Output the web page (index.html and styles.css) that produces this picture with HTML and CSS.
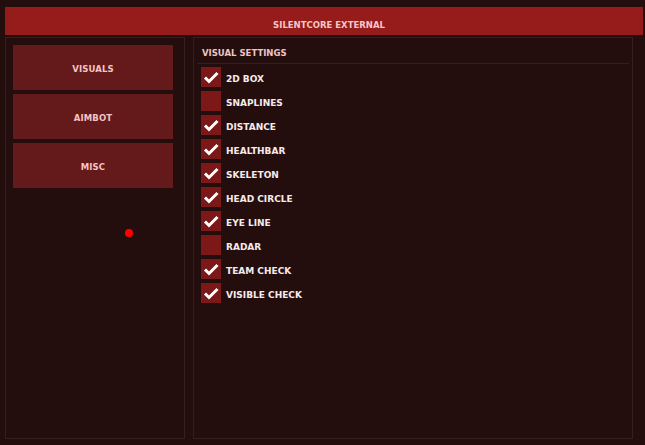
FILE: index.html
```html
<!DOCTYPE html>
<html lang="en">
<head>
<meta charset="utf-8">
<title>SilentCore External</title>
<link rel="stylesheet" href="styles.css">
</head>
<body>
<div class="app">
  <header class="title">SILENTCORE EXTERNAL</header>
  <main class="columns">
    <nav class="side">
      <button class="tab">VISUALS</button>
      <button class="tab">AIMBOT</button>
      <button class="tab">MISC</button>
    </nav>
    <section class="panel">
      <h2 class="heading">VISUAL SETTINGS</h2>
      <ul class="list">
        <li class="row"><span class="box"><svg class="tick" viewBox="0 0 20 20"><path d="M4 10.5 8 14.5 16.5 6"/></svg></span>2D BOX</li>
        <li class="row"><span class="box"></span>SNAPLINES</li>
        <li class="row"><span class="box"><svg class="tick" viewBox="0 0 20 20"><path d="M4 10.5 8 14.5 16.5 6"/></svg></span>DISTANCE</li>
        <li class="row"><span class="box"><svg class="tick" viewBox="0 0 20 20"><path d="M4 10.5 8 14.5 16.5 6"/></svg></span>HEALTHBAR</li>
        <li class="row"><span class="box"><svg class="tick" viewBox="0 0 20 20"><path d="M4 10.5 8 14.5 16.5 6"/></svg></span>SKELETON</li>
        <li class="row"><span class="box"><svg class="tick" viewBox="0 0 20 20"><path d="M4 10.5 8 14.5 16.5 6"/></svg></span>HEAD CIRCLE</li>
        <li class="row"><span class="box"><svg class="tick" viewBox="0 0 20 20"><path d="M4 10.5 8 14.5 16.5 6"/></svg></span>EYE LINE</li>
        <li class="row"><span class="box"></span>RADAR</li>
        <li class="row"><span class="box"><svg class="tick" viewBox="0 0 20 20"><path d="M4 10.5 8 14.5 16.5 6"/></svg></span>TEAM CHECK</li>
        <li class="row"><span class="box"><svg class="tick" viewBox="0 0 20 20"><path d="M4 10.5 8 14.5 16.5 6"/></svg></span>VISIBLE CHECK</li>
      </ul>
    </section>
  </main>
  <span class="cursor"></span>
</div>
</body>
</html>
```
FILE: styles.css
```css
* { box-sizing: border-box; }
html, body { margin: 0; height: 100%; }
body {
  background: #240e0d;
  font-family: "DejaVu Sans", sans-serif;
  font-weight: 700;
  font-size: 8.5px;
  overflow: hidden;
}
.app {
  position: relative;
  height: 445px;
  padding: 7px 2px 6px 5px;
  display: flex;
  flex-direction: column;
  gap: 2px;
}
.title {
  height: 28px;
  background: #961b1b;
  color: #f6c6c6;
  padding: 13px 0 0 10px;
  text-align: center;
  line-height: 11px;
}
.columns {
  flex: 1;
  display: flex;
  gap: 8px;
  padding-right: 10px;
}
.side {
  width: 180px;
  border: 1px solid #361e1e;
  padding: 7px 11px 7px 7px;
  display: flex;
  flex-direction: column;
  gap: 4px;
}
.tab {
  height: 45px;
  border: 0;
  padding: 3px 0 0;
  background: #641a1a;
  color: #f3c4c4;
  font: inherit;
  letter-spacing: .1px;
}
.panel {
  flex: 1;
  border: 1px solid #361e1e;
  padding: 0 3px;
}
.heading {
  margin: 0;
  height: 26px;
  padding: 10px 0 0 5px;
  line-height: 11px;
  font-size: 8.5px;
  font-weight: 700;
  color: #f0c4c4;
  border-bottom: 1px solid #361e1e;
}
.list {
  list-style: none;
  margin: 0;
  padding: 3px 0 0 4px;
  display: flex;
  flex-direction: column;
  gap: 4px;
}
.row {
  display: flex;
  align-items: flex-start;
  gap: 5px;
  height: 20px;
  color: #f6eaea;
  font-size: 9px;
  line-height: 24px;
}
.box {
  width: 20px;
  height: 20px;
  background: #7d1818;
  flex: none;
}
.tick {
  display: block;
  width: 20px;
  height: 20px;
}
.tick path {
  fill: none;
  stroke: #fff;
  stroke-width: 3;
}
.cursor {
  position: absolute;
  left: 125px;
  top: 229px;
  width: 8px;
  height: 8px;
  border-radius: 50%;
  background: #ff0000;
}
```
